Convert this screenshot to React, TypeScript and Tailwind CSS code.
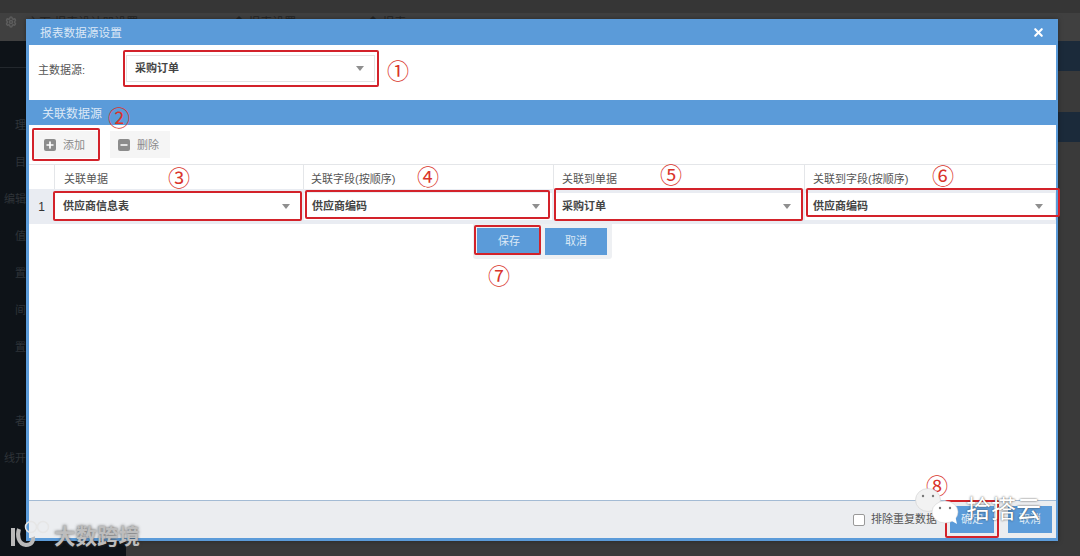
import { X, Plus, Minus, Settings } from 'lucide-react';

const FONT = "font-['Liberation_Sans','Noto_Sans_CJK_SC',sans-serif]";

function Caret() {
  return <span className="w-0 h-0 border-x-[4px] border-x-transparent border-t-[5px] border-t-[#8f8f8f] shrink-0" />;
}

function Mark({ n, className }: { n: string; className: string }) {
  return <span className={`absolute text-[22px] leading-[24px] text-[#d9342b] ${className}`}>{n}</span>;
}

function RedBox({ className }: { className: string }) {
  return <div className={`absolute border-2 border-[#d3222a] rounded-[2px] ${className}`} />;
}

const cols = [
  { head: '关联单据', value: '供应商信息表', w: 'w-[249px]', pad: 'pl-[9px]' },
  { head: '关联字段(按顺序)', value: '供应商编码', w: 'w-[250px]', pad: 'pl-[7px]' },
  { head: '关联到单据', value: '采购订单', w: 'w-[251px]', pad: 'pl-[8px]' },
  { head: '关联到字段(按顺序)', value: '供应商编码', w: 'flex-1', pad: 'pl-[8px]' },
];

export default function App() {
  return (
    <div className={`relative w-[1080px] h-[556px] overflow-hidden bg-[#3a3a3a] ${FONT}`}>
      {/* page behind the dialog */}
      <div className="h-[41px] bg-[#404040] border-t-[13px] border-[#363636] flex items-start pt-[3px] pl-[5px] text-[#262626]">
        <Settings size={12} strokeWidth={3} className="text-[#5c5c5c] shrink-0" />
        <div className="flex h-[3px] overflow-hidden text-[12px] leading-[14px] ml-[10px] whitespace-nowrap">
          <span className="w-[206px]">主页 报表设计器设置</span>
          <span className="w-[134px]">◆ 报表设置</span>
          <span>◆ 报表</span>
        </div>
      </div>
      <div className="flex h-[515px]">
        <div className="w-[126px] bg-[#0e1318]">
          <div className="w-[26px] h-[27px] border-b border-[#23282d]" />
          <div className="w-[26px] overflow-hidden text-[11px] leading-[13px] text-[#2f3439] flex flex-col items-end pt-[51px] gap-[24px] whitespace-nowrap">
            <span>理</span>
            <span>目</span>
            <span>编辑</span>
            <span>值</span>
            <span>置</span>
            <span>间</span>
            <span>置</span>
            <span className="mt-[37px]">者</span>
            <span>线开</span>
          </div>
        </div>
        <div className="flex-1 flex justify-end">
          <div className="w-[22px] flex flex-col gap-[41px]">
            <div className="h-[30px] bg-[#1b2a3a]" />
            <div className="h-[30px] bg-[#1b2a3a]" />
          </div>
        </div>
      </div>

      {/* dialog */}
      <div className="absolute left-[26px] top-[19px] w-[1032px] h-[522px] bg-[#5b9bd9] pl-[3px] pr-[2px] pb-[3px] flex flex-col shadow-[0_0_5px_rgba(0,0,0,0.35)]">
        <div className="h-[26px] shrink-0 flex items-center justify-between pl-[11px] pr-[11px] text-[11.7px] text-[#dbe8f6]">
          <span className="pt-[1px]">报表数据源设置</span>
          <X size={13} strokeWidth={4} className="text-white" />
        </div>

        <div className="h-[55px] shrink-0 bg-white flex pl-[9px] pt-[10px] text-[11px] text-[#555]">
          <span className="w-[88px] pt-[7px]">主数据源:</span>
          <div className="w-[249px] h-[27px] border border-[#e3e3e3] flex items-center justify-between pl-[8px] pr-[10px] text-[11px] font-bold text-[#444]">
            采购订单
            <Caret />
          </div>
        </div>

        <div className="h-[25px] shrink-0 flex items-center pl-[13px] pt-[2px] text-[12px] text-[#dbe8f6]">关联数据源</div>

        <div className="flex-1 bg-white flex flex-col min-h-0">
          <div className="h-[39px] shrink-0 flex items-center gap-[11px] pl-[3px] text-[11px] text-[#8a8a8a]">
            <div className="w-[67px] h-[27px] bg-[#f5f5f5] flex items-center pl-[12px] gap-[7px]">
              <span className="w-[12px] h-[12px] rounded-[2px] bg-[#8c8c8c] flex items-center justify-center">
                <Plus size={10} strokeWidth={4} className="text-white" />
              </span>
              <span className="pt-[1px]">添加</span>
            </div>
            <div className="w-[60px] h-[27px] bg-[#f5f5f5] flex items-center pl-[8px] gap-[7px]">
              <span className="w-[12px] h-[12px] rounded-[2px] bg-[#8c8c8c] flex items-center justify-center">
                <Minus size={10} strokeWidth={4} className="text-white" />
              </span>
              <span className="pt-[1px]">删除</span>
            </div>
          </div>

          <div className="flex h-[25px] shrink-0 border-t border-[#e4e6e9] text-[11px] text-[#555]">
            <div className="w-[25px] shrink-0" />
            {cols.map((c) => (
              <div key={c.head} className={`${c.w} ${c.pad} border-l border-[#e4e6e9] pt-[6px]`}>{c.head}</div>
            ))}
          </div>

          <div className="flex h-[35px] shrink-0 bg-[#e9ecf2] text-[11px]">
            <div className="w-[25px] shrink-0 flex items-center justify-center text-[12px] font-medium text-[#333]">1</div>
            {cols.map((c) => (
              <div key={c.head} className={`${c.w} px-[1px] py-[4px]`}>
                <div className="h-full bg-white flex items-center justify-between pl-[8px] pr-[12px] font-bold text-[#444]">
                  {c.value}
                  <Caret />
                </div>
              </div>
            ))}
          </div>

          {/* row editor */}
          <div className="self-start ml-[444px] w-[139px] h-[35px] bg-[#eef0f3] rounded-b-[3px] flex gap-[4px] pl-[4px] pt-[4px] text-[11px] text-[#dce9f6]">
            <div className="w-[64px] h-[27px] bg-[#5b9bd9] flex items-center justify-center">保存</div>
            <div className="w-[62px] h-[27px] bg-[#5b9bd9] flex items-center justify-center">取消</div>
          </div>

          <div className="flex-1" />

          <div className="h-[38px] shrink-0 bg-[#ebedf0] border-t border-[#a3bbd4] flex items-center justify-end gap-[6px] pr-[4px] text-[11px] text-[#555]">
            <span className="w-[12px] h-[12px] border border-[#999] rounded-[2px] bg-white" />
            <span className="mr-[7px]">排除重复数据</span>
            <div className="w-[44px] h-[27px] bg-[#5b9bd9] flex items-center justify-center text-[#dce9f6]">确定</div>
            <div className="w-[44px] h-[27px] bg-[#5b9bd9] flex items-center justify-center text-[#dce9f6] ml-[8px]">取消</div>
          </div>
        </div>
      </div>

      {/* annotations */}
      <RedBox className="left-[123px] top-[50px] w-[256px] h-[37px]" />
      <RedBox className="left-[32px] top-[128px] w-[68px] h-[33px]" />
      <RedBox className="left-[53px] top-[191px] w-[249px] h-[30px]" />
      <RedBox className="left-[305px] top-[190px] w-[245px] h-[29px]" />
      <RedBox className="left-[554px] top-[188px] w-[249px] h-[33px]" />
      <RedBox className="left-[806px] top-[188px] w-[254px] h-[29px]" />
      <RedBox className="left-[474px] top-[225px] w-[67px] h-[30px]" />
      <RedBox className="left-[945px] top-[500px] w-[54px] h-[38px]" />
      <Mark n="①" className="left-[387px] top-[60px]" />
      <Mark n="②" className="left-[108px] top-[107px]" />
      <Mark n="③" className="left-[168px] top-[167px]" />
      <Mark n="④" className="left-[417px] top-[166px]" />
      <Mark n="⑤" className="left-[660px] top-[164px]" />
      <Mark n="⑥" className="left-[932px] top-[165px]" />
      <Mark n="⑦" className="left-[488px] top-[265px]" />
      <Mark n="⑧" className="left-[926px] top-[475px]" />

      {/* watermarks */}
      <svg className="absolute left-[8px] top-[519px]" width="46" height="30" viewBox="0 0 46 30" fill="none">
        <path d="M5 9v18" stroke="#b9b9b9" strokeWidth="4" />
        <path d="M11 10c-2 6-1 15 7 16 6 0 8-5 7-8" stroke="#b9b9b9" strokeWidth="4" />
        <circle cx="23" cy="8" r="5.5" stroke="#e6e6e6" strokeWidth="1.5" />
        <circle cx="35" cy="8" r="5.5" stroke="#e6e6e6" strokeWidth="1.5" />
      </svg>
      <div className="absolute left-[54px] top-[524px] text-[21.5px] leading-[26px] font-bold text-[#bdbdbd] [text-shadow:0_0_3px_rgba(60,60,60,0.8)]">大数跨境</div>
      <svg className="absolute left-[915px] top-[487px]" width="46" height="38" viewBox="0 0 46 38">
        <ellipse cx="13" cy="13" rx="12.5" ry="11.5" fill="#f2f2f2" stroke="#c9c9c9" strokeWidth="0.5" />
        <ellipse cx="30" cy="25" rx="13" ry="11" fill="#ffffff" stroke="#c9c9c9" strokeWidth="0.5" />
        <path d="M35 33l7 4-2-9z" fill="#ffffff" />
        <circle cx="8" cy="9" r="1.2" fill="#777" />
        <circle cx="18" cy="9" r="1.2" fill="#777" />
        <circle cx="25" cy="21" r="1.2" fill="#777" />
        <circle cx="35" cy="21" r="1.2" fill="#777" />
      </svg>
      <div className="absolute left-[966px] top-[494px] text-[25px] leading-[30px] text-white whitespace-nowrap [text-shadow:0_0_2px_rgba(40,40,40,0.9)]">拾搭云</div>
    </div>
  );
}
